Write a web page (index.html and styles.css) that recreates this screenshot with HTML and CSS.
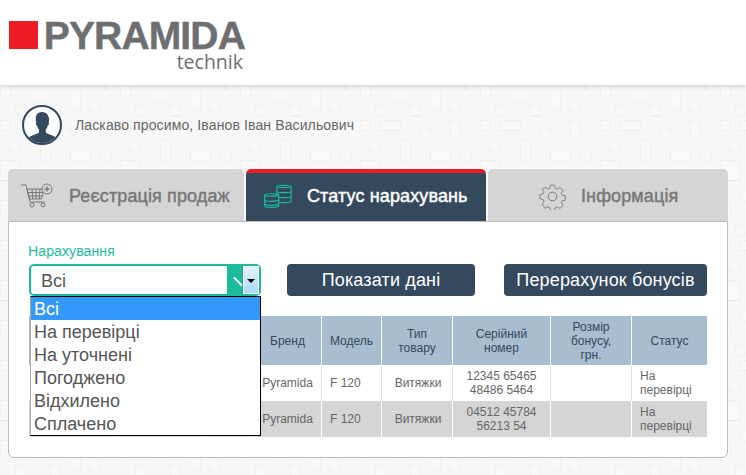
FILE: index.html
```html
<!DOCTYPE html>
<html lang="uk">
<head>
<meta charset="utf-8">
<title>Pyramida technik</title>
<link rel="stylesheet" href="styles.css">
</head>
<body>
<header class="site-header">
  <div class="logo">
    <span class="logo-mark"></span>
    <div class="logo-words">
      <span class="logo-name">PYRAMIDA</span>
      <span class="logo-sub">technik</span>
    </div>
  </div>
</header>
<main class="page">
  <div class="welcome">
    <svg class="avatar" width="40" height="40" viewBox="0 0 40 40">
      <circle cx="20" cy="20" r="19" fill="#fff" stroke="#34495e" stroke-width="2"/>
      <clipPath id="avclip"><circle cx="20" cy="20" r="18"/></clipPath>
      <path clip-path="url(#avclip)" fill="#34495e" d="M20 7c-4 0-6.300 2.800-6.300 6.600 0 1.500.2 2.700.5 3.700-.5.300-.4 1.500 0 2.500.3.700.6.900.9.900.4 1.600 1.100 2.900 1.900 3.700v3.200c-1.600 1.700-8.500 2.800-10.500 5.500-1 1.400-1.500 3-1.500 6h30.800c0-3-.5-4.600-1.500-6-2-2.700-8.900-3.800-10.500-5.500v-3.200c.8-.8 1.500-2.100 1.900-3.700.3 0 .6-.2.900-.9.400-1 .5-2.200 0-2.500.3-1 .5-2.200.5-3.700C26.300 9.800 24 7 20 7z"/>
    </svg>
    <span class="welcome-text">Ласкаво просимо, Іванов Іван Васильович</span>
  </div>
  <nav class="tabs">
    <div class="tab">
      <svg class="tab-icon" width="32" height="26" viewBox="0 0 32 26" fill="none" stroke="#777" stroke-width="1">
        <path d="M0 2h5l4 17h15"/>
        <path d="M6 6h17l-2.500 10H8.500z"/>
        <path d="M7 9.500h15M8 13h13M11 6l.8 10M15 6v10M19 6l-.8 10"/>
        <circle cx="11" cy="22" r="2"/><circle cx="22" cy="22" r="2"/>
        <circle cx="26" cy="6" r="5" fill="#d5d5d5"/>
        <path d="M26 3.500v5M23.500 6h5" stroke-width="1.300"/>
      </svg>
      <span>Реєстрація продаж</span>
    </div>
    <div class="tab tab-active">
      <svg class="tab-icon" width="28" height="26" viewBox="0 0 28 26" fill="#34495e" stroke="#1abc9c" stroke-width="1.200">
        <path d="M13 3.500c0-1.500 14-1.500 14 0v15c0 1.500-14 1.500-14 0z"/>
        <path d="M13 3.500c0 1.500 14 1.500 14 0M13 8.500c0 1.500 14 1.500 14 0M13 13.500c0 1.500 14 1.500 14 0"/>
        <path d="M.7 12c0-1.700 14-1.700 14 0v11c0 1.700-14 1.700-14 0z"/>
        <path d="M.7 12c0 1.700 14 1.700 14 0M.7 17c0 1.700 14 1.700 14 0M.7 21c0 1.700 14 1.700 14 0"/>
      </svg>
      <span>Статус нарахувань</span>
    </div>
    <div class="tab">
      <svg class="tab-icon" width="27" height="27" viewBox="0 0 28 28" fill="none" stroke="#777" stroke-width="1">
        <circle cx="14" cy="14" r="4.500"/>
        <path d="M11.500 1h5l.7 3.600 2.300 1 3.100-2 3.500 3.500-2 3.100 1 2.300 3.600.7v5l-3.600.7-1 2.300 2 3.100-3.500 3.500-3.100-2-2.300 1-.7 3.600h-5l-.7-3.600-2.300-1-3.100 2L2.200 22.800l2-3.100-1-2.300-3.600-.7v-5l3.600-.7 1-2.300-2-3.100L5.700 3.600l3.100 2 2.300-1z" transform="translate(1.400 1.400) scale(.9)"/>
      </svg>
      <span>Інформація</span>
    </div>
  </nav>
  <section class="panel">
    <div class="filters">
      <div class="field">
        <label class="field-label">Нарахування</label>
        <div class="select">
          <span class="select-value">Всі</span>
          <span class="select-toggle">
            <span class="toggle-slash"></span>
            <span class="native-btn"><span class="native-arrow"></span></span>
          </span>
          <ul class="options">
            <li class="option option-selected">Всі</li>
            <li class="option">На перевірці</li>
            <li class="option">На уточнені</li>
            <li class="option">Погоджено</li>
            <li class="option">Відхилено</li>
            <li class="option">Сплачено</li>
          </ul>
        </div>
      </div>
      <button class="btn btn-show">Показати дані</button>
      <button class="btn btn-recount">Перерахунок бонусів</button>
    </div>
    <table class="data">
      <colgroup>
        <col class="c1"><col class="c2"><col class="c3"><col class="c4"><col class="c5"><col class="c6"><col class="c7"><col class="c8"><col class="c9">
      </colgroup>
      <thead>
        <tr><th></th><th></th><th></th><th>Бренд</th><th>Модель</th><th>Тип<br>товару</th><th>Серійний<br>номер</th><th>Розмір<br>бонусу,<br>грн.</th><th>Статус</th></tr>
      </thead>
      <tbody>
        <tr><td></td><td></td><td></td><td class="brand">Pyramida</td><td class="left">F 120</td><td class="type">Витяжки</td><td>12345 65465<br>48486 5464</td><td></td><td class="left">На<br>перевірці</td></tr>
        <tr><td></td><td></td><td></td><td class="brand">Pyramida</td><td class="left">F 120</td><td class="type">Витяжки</td><td>04512 45784<br>56213 54</td><td></td><td class="left">На<br>перевірці</td></tr>
      </tbody>
    </table>
  </section>
</main>
</body>
</html>
```
FILE: styles.css
```css
* { box-sizing: border-box; }
html, body { margin: 0; padding: 0; height: 475px; overflow: hidden; }
body {
  font-family: "Liberation Sans", Arial, sans-serif;
  background-color: #f7f7f7;
  background-image:
    url("data:image/svg+xml;utf8,<svg xmlns='http://www.w3.org/2000/svg' width='120' height='120'><g fill='%23f9f9f9' stroke='%23f1f1f1'><rect x='.5' y='.5' width='10' height='10'/><rect x='20.500' y='.5' width='20' height='10'/><rect x='60.500' y='10.500' width='10' height='10'/><rect x='90.500' y='.5' width='10' height='20'/><rect x='10.500' y='20.500' width='10' height='10'/><rect x='40.500' y='20.500' width='10' height='20'/><rect x='70.500' y='30.500' width='20' height='10'/><rect x='100.500' y='30.500' width='10' height='10'/><rect x='.5' y='40.500' width='20' height='20'/><rect x='30.500' y='50.500' width='10' height='10'/><rect x='60.500' y='50.500' width='10' height='20'/><rect x='90.500' y='50.500' width='20' height='10'/><rect x='20.500' y='70.500' width='10' height='10'/><rect x='40.500' y='70.500' width='20' height='10'/><rect x='80.500' y='70.500' width='10' height='10'/><rect x='105.500' y='70.500' width='10' height='20'/><rect x='.5' y='80.500' width='10' height='20'/><rect x='30.500' y='90.500' width='20' height='10'/><rect x='70.500' y='90.500' width='10' height='20'/><rect x='90.500' y='100.500' width='10' height='10'/><rect x='15.500' y='105.500' width='10' height='10'/><rect x='50.500' y='105.500' width='10' height='10'/></g><g fill='none' stroke='%23e9e9e9'><path d='M20.500 10.500h20M70.500 30.500v10M.5 60.500h20M105.500 70.500v20M50.500 115.500h10'/></g></svg>");
}
.site-header {
  height: 85px;
  background: #fff;
  box-shadow: 0 1px 5px rgba(0,0,0,.18);
  padding: 21px 0 0 9px;
}
.logo { display: flex; align-items: flex-start; }
.logo-mark { width: 29px; height: 28px; background: #ed1c24; }
.logo-words { display: flex; flex-direction: column; align-items: flex-end; margin-left: 6px; width: 201px; }
.logo-name {
  font-size: 39px; line-height: 30px; font-weight: 700; color: #6d6e71;
  letter-spacing: -.85px; white-space: nowrap;
  -webkit-text-stroke: .4px #6d6e71;
}
.logo-sub {
  font-family: "Open Sans", sans-serif;
  font-size: 19.500px; line-height: 20px; color: #6d6e71; margin-top: 1px; margin-right: 2px;
}
.page { padding: 0 18px 0 8px; }
.welcome { display: flex; padding: 20px 0 0 14px; height: 84px; align-items: flex-start; }
.avatar { display: block; flex: none; }
.welcome-text { margin: 11px 0 0 13px; font-size: 14px; line-height: 18px; color: #666; letter-spacing: .12px; }
.tabs { display: flex; gap: 2px; height: 52px; }
.tab {
  width: 240px; height: 52px; background: #d5d5d5; border-radius: 5px 5px 0 0;
  display: flex; align-items: center; font-size: 18px; color: #777;
  padding: 2px 0 0 13px; letter-spacing: .12px;
  -webkit-text-stroke: .45px currentColor;
}
.tab:first-child { width: 236px; }
.tab-active { background: #34495e; color: #fff; border-top: 4px solid #ed1c24; padding: 0 0 2px 18px; }
.tab:nth-child(2) span { margin-left: 15px; }
.tab:nth-child(1) span { margin-left: 16px; }
.tab:nth-child(3) { padding-left: 51px; }
.tab:nth-child(3) span { margin-left: 15px; }
.tab-icon { flex: none; display: block; }
.panel {
  height: 237px; background: #fff; border: 1px solid #bbb;
  border-radius: 0 0 6px 6px; padding: 21px 20px 0 20px;
}
.filters { display: flex; align-items: flex-end; height: 53px; }
.field { width: 232px; margin-right: 26px; position: relative; }
.field-label { display: block; font-size: 14px; line-height: 16px; color: #1abc9c; margin: 0 0 5px -1px; letter-spacing: .12px; }
.select {
  position: relative; height: 32px; border: 2px solid #1abc9c; border-radius: 5px;
  display: flex; justify-content: space-between; background: #fff;
}
.select-value { font-size: 18px; line-height: 30px; color: #555; padding-left: 10px; }
.select-toggle { width: 32px; background: #1abc9c; display: flex; position: relative; }
.toggle-slash {
  position: absolute; left: 5px; top: 15px; width: 13px; height: 2px; background: #fff; transform: rotate(45deg);
}
.native-btn {
  position: absolute; right: 0; top: 0; width: 16px; height: 28px; border: 1px solid #fff;
  box-shadow: -1px 0 0 #3f8f95;
  background: linear-gradient(#e6f3fb, #a8daf8);
  display: flex; justify-content: center; padding-top: 12px;
}
.native-arrow { width: 0; height: 0; border: 4px solid transparent; border-top-color: #000; }
.options {
  position: absolute; left: -1px; top: 30px; width: 231px; height: 140px; margin: 0; padding: 0;
  list-style: none; background: #fff; border: 1px solid #000; border-left-color: #aaa; z-index: 2;
}
.option { height: 23px; font-size: 18px; line-height: 25px; color: #555; padding-left: 3px; }
.option-selected { background: #3399ff; color: #fff; }
.btn {
  height: 32px; padding: 0; border: 0; border-radius: 4px; background: #34495e; color: #fff;
  font-family: inherit; font-size: 18px; text-align: center; letter-spacing: .15px;
}
.btn-show { width: 188px; margin-right: 29px; }
.btn-recount { width: 203px; }
.data {
  border-collapse: separate; border-spacing: 0; table-layout: fixed; width: 678px;
  margin-top: 20px; font-size: 12px; line-height: 14px;
}
.c1 { width: 85px; } .c2 { width: 93px; } .c3 { width: 47px; } .c4 { width: 68px; }
.c5 { width: 60px; } .c6 { width: 71px; } .c7 { width: 98px; } .c8 { width: 81px; } .c9 { width: 75px; }
.data th, .data td { border-right: 1px solid #e0e0e0; padding: 0; text-align: center; }
.data th:last-child, .data td:last-child { border-right: 0; }
.data th { height: 49px; background: #a9bdd0; color: #34495e; font-weight: 400; border-right-color: #fff; }
.data td { height: 36px; color: #666; }
.data tbody tr:nth-child(2) td { background: #d5d5d5; border-right-color: #fff; }
.data .left { text-align: left; padding-left: 8px; }
.data .type { padding-left: 2px; }
```
